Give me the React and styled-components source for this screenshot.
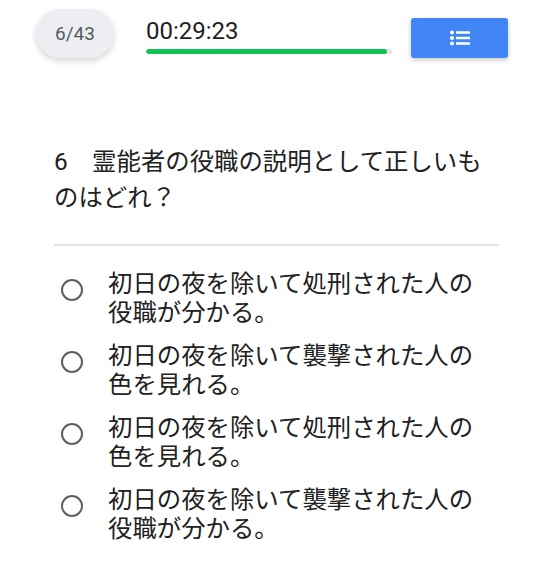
import styled, { createGlobalStyle } from "styled-components";

const GlobalStyle = createGlobalStyle`
  html, body {
    margin: 0;
    padding: 0;
    background: #ffffff;
  }
  body {
    font-family: Roboto, "Noto Sans CJK JP", sans-serif;
    color: #212121;
  }
`;

const options = [
  "初日の夜を除いて処刑された人の役職が分かる。",
  "初日の夜を除いて襲撃された人の色を見れる。",
  "初日の夜を除いて処刑された人の色を見れる。",
  "初日の夜を除いて襲撃された人の役職が分かる。",
];

export default function App() {
  const progress = 98;
  return (
    <>
      <GlobalStyle />
      <Page>
        <Header>
          <Counter>6/43</Counter>
          <TimerBlock>
            <TimeText>00:29:23</TimeText>
            <Track>
              <Fill style={{ width: `${progress}%` }} />
            </Track>
          </TimerBlock>
          <ListButton>
            <svg width="20" height="16" viewBox="0 0 20 16" fill="#fff">
              <circle cx="2" cy="2.5" r="2" />
              <circle cx="2" cy="8" r="2" />
              <circle cx="2" cy="13.5" r="2" />
              <rect x="6" y="1.2" width="14" height="2.6" rx="0.5" />
              <rect x="6" y="6.7" width="14" height="2.6" rx="0.5" />
              <rect x="6" y="12.2" width="14" height="2.6" rx="0.5" />
            </svg>
          </ListButton>
        </Header>

        <Content>
          <Question>6　霊能者の役職の説明として正しいものはどれ？</Question>
          <Divider />
          <OptionList>
            {options.map((text, i) => (
              <Option key={i}>
                <Radio />
                <OptionText>{text}</OptionText>
              </Option>
            ))}
          </OptionList>
        </Content>
      </Page>
    </>
  );
}

const Page = styled.div`
  width: 553px;
  min-height: 571px;
`;

const Header = styled.div`
  display: flex;
  align-items: flex-start;
  padding: 9px 0 0 36px;
`;

const Counter = styled.div`
  width: 78px;
  height: 49px;
  border-radius: 25px;
  background: #eceef1;
  box-shadow: 0 3px 6px rgba(0, 0, 0, 0.16);
  display: flex;
  align-items: center;
  justify-content: center;
  font-size: 19px;
  color: #555a5f;
`;

const TimerBlock = styled.div`
  width: 246px;
  margin: 8px 0 0 32px;
`;

const TimeText = styled.div`
  font-size: 24px;
  line-height: 28px;
  color: #212121;
`;

const Track = styled.div`
  margin-top: 4px;
  height: 5px;
  border-radius: 3px;
  background: #e6e6e6;
  overflow: hidden;
`;

const Fill = styled.div`
  height: 100%;
  border-radius: 3px;
  background: #0fc255;
`;

const ListButton = styled.button`
  width: 97px;
  height: 40px;
  margin: 9px 0 0 19px;
  border: none;
  border-radius: 3px;
  background: #4285f4;
  box-shadow: 0 2px 5px rgba(0, 0, 0, 0.22);
  display: flex;
  align-items: center;
  justify-content: center;
  padding: 0;
`;

const Content = styled.div`
  width: 445px;
  margin: 86px 0 0 54px;
`;

const Question = styled.div`
  font-size: 24.4px;
  line-height: 36px;
  color: #212121;
`;

const Divider = styled.div`
  height: 2px;
  background: #e3e3e3;
  margin-top: 28px;
`;

const OptionList = styled.div`
  display: flex;
  flex-direction: column;
  gap: 14px;
  margin-top: 23px;
`;

const Option = styled.div`
  display: flex;
  align-items: flex-start;
`;

const Radio = styled.span`
  flex: none;
  box-sizing: border-box;
  width: 22px;
  height: 22px;
  margin: 10px 25px 0 7px;
  border-radius: 50%;
  border: 2.5px solid #5f5f5f;
`;

const OptionText = styled.div`
  width: 378px;
  font-size: 24.4px;
  line-height: 29px;
  color: #212121;
`;
